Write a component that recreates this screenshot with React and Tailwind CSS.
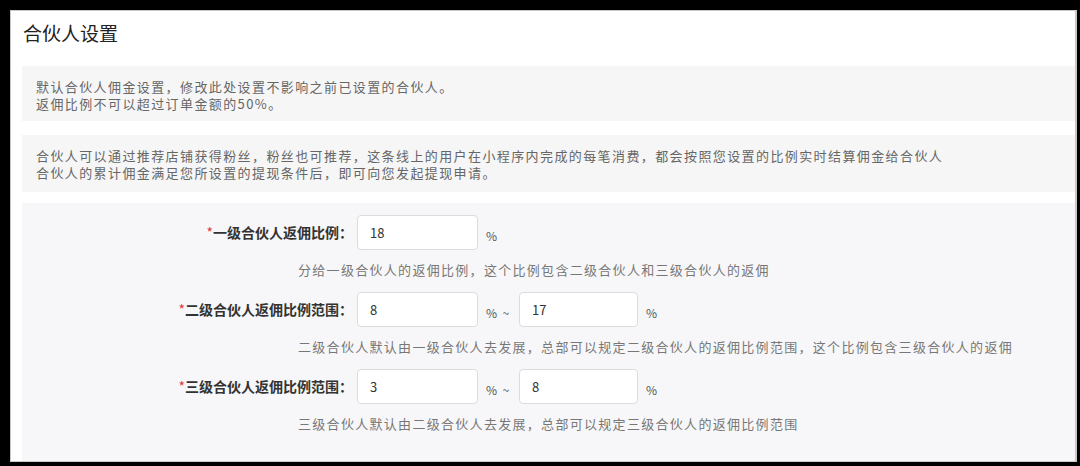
const FONT = { fontFamily: '"Noto Sans CJK SC", "Liberation Sans", sans-serif' };

const rows = [
  {
    label: "一级合伙人返佣比例：",
    values: ["18"],
    help: "分给一级合伙人的返佣比例，这个比例包含二级合伙人和三级合伙人的返佣",
  },
  {
    label: "二级合伙人返佣比例范围：",
    values: ["8", "17"],
    help: "二级合伙人默认由一级合伙人去发展，总部可以规定二级合伙人的返佣比例范围，这个比例包含三级合伙人的返佣",
  },
  {
    label: "三级合伙人返佣比例范围：",
    values: ["3", "8"],
    help: "三级合伙人默认由二级合伙人去发展，总部可以规定三级合伙人的返佣比例范围",
  },
];

function NumInput({ value, w = "w-[121px]" }) {
  return (
    <input
      type="text"
      defaultValue={value}
      className={`${w} h-[35px] rounded-[4px] border border-[#dcdcdc] bg-white px-3 text-[13px] text-[#333] outline-none`}
      style={FONT}
    />
  );
}

function FormRow({ row }) {
  return (
    <div className="mb-[14px]">
      <div className="flex items-center">
        <label className="w-[335px] pr-[4px] text-right text-[14px] font-bold text-[#333]">
          <span className="text-[#e4393c] font-normal">*</span>
          {row.label}
        </label>
        <NumInput value={row.values[0]} />
        <span className="ml-[8px] mt-[7px] text-[12px] text-[#555] whitespace-pre">
          {row.values.length > 1 ? "%  ~" : "%"}
        </span>
        {row.values.length > 1 && (
          <>
            <div className="ml-[10px]">
              <NumInput value={row.values[1]} w="w-[119px]" />
            </div>
            <span className="ml-[8px] mt-[7px] text-[12px] text-[#555]">%</span>
          </>
        )}
      </div>
      <p className="mt-[11px] ml-[276px] text-[13px] leading-[17px] tracking-[1.3px] text-[#777]">
        {row.help}
      </p>
    </div>
  );
}

export default function App() {
  return (
    <div className="w-[1080px] h-[466px] bg-black overflow-hidden pt-[10px] pl-[10px]" style={FONT}>
      <div className="w-[1067px] h-[452px] border border-[#c8c8c8] border-r-[2px] bg-white overflow-hidden">
        <div className="h-[55px] pt-[10px] pl-[12px] text-[19px] leading-[24px] text-[#222]">
          合伙人设置
        </div>

        <div className="ml-[11px] bg-[#f6f6f6] pt-[12px] pb-[9px] pl-[14px] text-[13px] leading-[17px] tracking-[1.4px] text-[#666]">
          <p>默认合伙人佣金设置，修改此处设置不影响之前已设置的合伙人。</p>
          <p>返佣比例不可以超过订单金额的50%。</p>
        </div>

        <div className="ml-[11px] mt-[14px] bg-[#f6f6f6] pt-[12px] pb-[11px] pl-[14px] text-[13px] leading-[17px] tracking-[1.4px] text-[#666]">
          <p>合伙人可以通过推荐店铺获得粉丝，粉丝也可推荐，这条线上的用户在小程序内完成的每笔消费，都会按照您设置的比例实时结算佣金给合伙人</p>
          <p>合伙人的累计佣金满足您所设置的提现条件后，即可向您发起提现申请。</p>
        </div>

        <div className="ml-[11px] mt-[11px] h-[300px] bg-[#f7f7f9] pt-[12px]">
          {rows.map((row) => (
            <FormRow key={row.label} row={row} />
          ))}
        </div>
      </div>
    </div>
  );
}
